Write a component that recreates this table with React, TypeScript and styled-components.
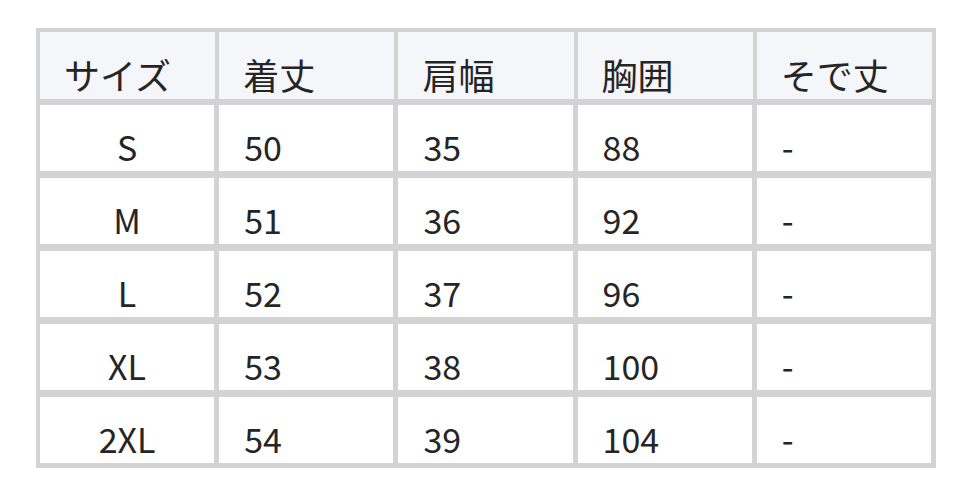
import React from 'react';
import styled, { createGlobalStyle } from 'styled-components';

const GlobalStyle = createGlobalStyle`
    html, body {
        margin: 0;
        padding: 0;
        background: #ffffff;
    }
    body {
        font-family: "Noto Sans CJK JP", "Noto Sans", sans-serif;
        color: #252525;
    }
`;

const Page = styled('div')`
    padding: 28px 36px;
`;

const SizeTable = styled('table')`
    width: 900px;
    table-layout: fixed;
    border-collapse: separate;
    border-spacing: 0;
    border: 2px solid #d3d3d3;
    font-size: 34px;
    line-height: 49px;
`;

const HeadCell = styled('th')`
    background: #f5f6fa;
    border: 2px solid #d3d3d3;
    height: 67px;
    padding: 18px 24px 0;
    box-sizing: border-box;
    text-align: left;
    font-size: 36px;
    font-weight: 400;
    vertical-align: bottom;
    white-space: nowrap;
`;

const BodyCell = styled('td')<{ $center?: boolean }>`
    background: #ffffff;
    border-style: solid;
    border-color: #d3d3d3;
    border-width: 4px 3px 3px 2px;
    padding: 17px 25px 0;
    text-align: ${({ $center }) => ($center ? 'center' : 'left')};
    vertical-align: bottom;
    white-space: nowrap;
`;

const headers = ['サイズ', '着丈', '肩幅', '胸囲', 'そで丈'];

const rows = [
    ['S', '50', '35', '88', '-'],
    ['M', '51', '36', '92', '-'],
    ['L', '52', '37', '96', '-'],
    ['XL', '53', '38', '100', '-'],
    ['2XL', '54', '39', '104', '-'],
];

export default function App() {
    return (
        <>
            <GlobalStyle />
            <Page>
                <SizeTable>
                    <thead>
                        <tr>
                            {headers.map((h) => (
                                <HeadCell key={h}>{h}</HeadCell>
                            ))}
                        </tr>
                    </thead>
                    <tbody>
                        {rows.map((row) => (
                            <tr key={row[0]}>
                                {row.map((value, i) => (
                                    <BodyCell key={i} $center={i === 0}>{value}</BodyCell>
                                ))}
                            </tr>
                        ))}
                    </tbody>
                </SizeTable>
            </Page>
        </>
    );
}
